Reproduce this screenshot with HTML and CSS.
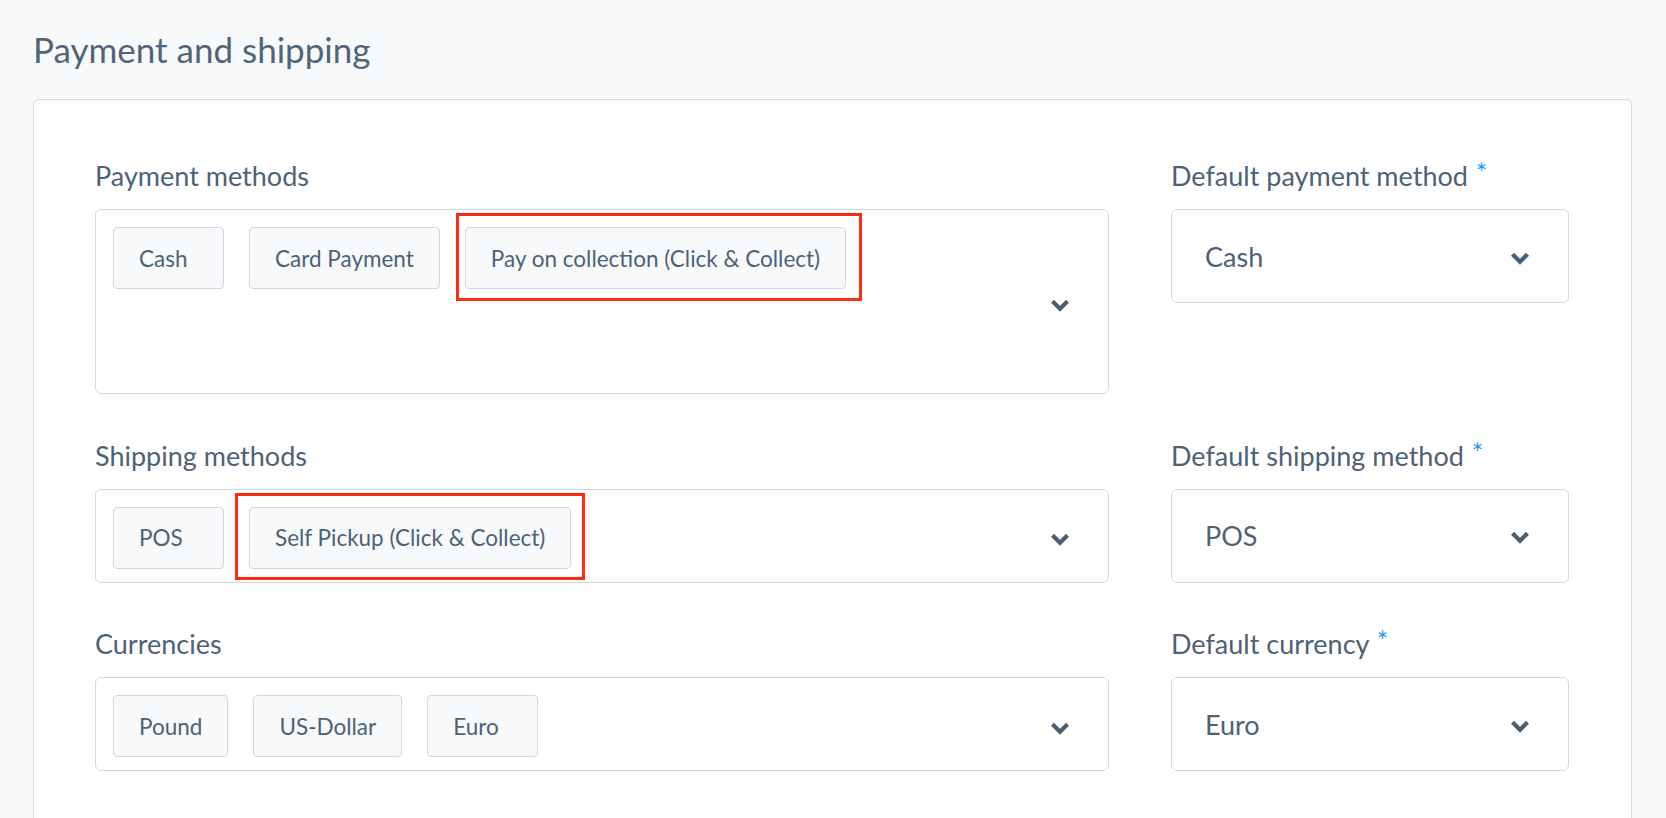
FILE: index.html
```html
<!DOCTYPE html>
<html lang="en">
<head>
<meta charset="utf-8">
<title>Payment and shipping</title>
<link rel="stylesheet" href="styles.css">
</head>
<body>
<div class="page">
  <h1 class="title">Payment and shipping</h1>
  <section class="card">
    <div class="grid">
      <div class="field">
        <div class="label">Payment methods</div>
        <div class="multi multi-tall">
          <div class="chips">
            <span class="chip">Cash</span>
            <span class="chip">Card Payment</span>
            <span class="chip mark mark-a">Pay on collection (Click &amp; Collect)</span>
          </div>
          <svg class="chev" viewBox="0 0 20 13" width="20" height="13"><path d="M2.5 2.2 L10 9.7 L17.5 2.2"/></svg>
        </div>
      </div>
      <div class="field">
        <div class="label">Default payment method <span class="req">*</span></div>
        <div class="select">
          <span class="value">Cash</span>
          <svg class="chev" viewBox="0 0 20 13" width="20" height="13"><path d="M2.5 2.2 L10 9.7 L17.5 2.2"/></svg>
        </div>
      </div>

      <div class="field">
        <div class="label">Shipping methods</div>
        <div class="multi">
          <div class="chips">
            <span class="chip">POS</span>
            <span class="chip mark mark-b">Self Pickup (Click &amp; Collect)</span>
          </div>
          <svg class="chev" viewBox="0 0 20 13" width="20" height="13"><path d="M2.5 2.2 L10 9.7 L17.5 2.2"/></svg>
        </div>
      </div>
      <div class="field">
        <div class="label">Default shipping method <span class="req">*</span></div>
        <div class="select">
          <span class="value">POS</span>
          <svg class="chev" viewBox="0 0 20 13" width="20" height="13"><path d="M2.5 2.2 L10 9.7 L17.5 2.2"/></svg>
        </div>
      </div>

      <div class="field">
        <div class="label">Currencies</div>
        <div class="multi">
          <div class="chips">
            <span class="chip">Pound</span>
            <span class="chip">US-Dollar</span>
            <span class="chip">Euro</span>
          </div>
          <svg class="chev" viewBox="0 0 20 13" width="20" height="13"><path d="M2.5 2.2 L10 9.7 L17.5 2.2"/></svg>
        </div>
      </div>
      <div class="field">
        <div class="label">Default currency <span class="req">*</span></div>
        <div class="select">
          <span class="value">Euro</span>
          <svg class="chev" viewBox="0 0 20 13" width="20" height="13"><path d="M2.5 2.2 L10 9.7 L17.5 2.2"/></svg>
        </div>
      </div>
    </div>
  </section>
</div>
</body>
</html>
```

FILE: styles.css
```css
html, body {
  margin: 0;
  padding: 0;
  background: #f8f9fb;
}

body {
  font-family: "Lato", "Liberation Sans", sans-serif;
  color: #4d6277;
}

.page {
  padding: 0 34px 0 33px;
}

.title {
  margin: 0 0 28px 0;
  padding-top: 27px;
  font-size: 35px;
  line-height: 44px;
  font-weight: 400;
  color: #50657a;
}

.card {
  background: #ffffff;
  border: 1px solid #d3dbe3;
  border-radius: 6px;
  padding: 58px 62px 60px 61px;
}

.grid {
  display: grid;
  grid-template-columns: 1fr 398px;
  column-gap: 62px;
  row-gap: 43.5px;
  align-items: start;
}

.label {
  font-size: 27px;
  line-height: 36px;
  height: 36px;
  margin-bottom: 15px;
  white-space: nowrap;
}

.req {
  color: #1d9bf0;
  font-size: 27px;
  line-height: 0;
  vertical-align: 3px;
  margin-left: 1px;
}

.multi {
  box-sizing: border-box;
  min-height: 94px;
  display: flex;
  align-items: flex-start;
  border: 1px solid #d0d9e2;
  border-radius: 6px;
  background: #ffffff;
  padding: 17px 38px 13px 17px;
}

.multi-tall {
  min-height: 185px;
}

.chips {
  flex: 1;
  display: flex;
  flex-wrap: wrap;
  gap: 25px;
}

.chip {
  position: relative;
  box-sizing: border-box;
  height: 62px;
  min-width: 111px;
  display: flex;
  align-items: center;
  padding: 0 25px;
  border: 1px solid #d0d9e2;
  border-radius: 4px;
  background: #f7f9fb;
  font-size: 22.5px;
  white-space: nowrap;
}

.mark::after {
  content: "";
  position: absolute;
  border: 3px solid #fb2c10;
  pointer-events: none;
}

.mark-a::after {
  top: -15px;
  left: -10px;
  right: -17px;
  bottom: -13px;
}

.mark-b::after {
  top: -15px;
  left: -15px;
  right: -15px;
  bottom: -12px;
}

.chev {
  flex: none;
  align-self: center;
  margin-top: 4px;
}

.chev path {
  fill: none;
  stroke: #4b5e72;
  stroke-width: 4.2;
  stroke-linejoin: miter;
}

.select {
  box-sizing: border-box;
  height: 94px;
  display: flex;
  align-items: center;
  justify-content: space-between;
  border: 1px solid #d0d9e2;
  border-radius: 6px;
  background: #ffffff;
  padding: 0 38px 0 33px;
}

.select .value {
  font-size: 27px;
}
```
